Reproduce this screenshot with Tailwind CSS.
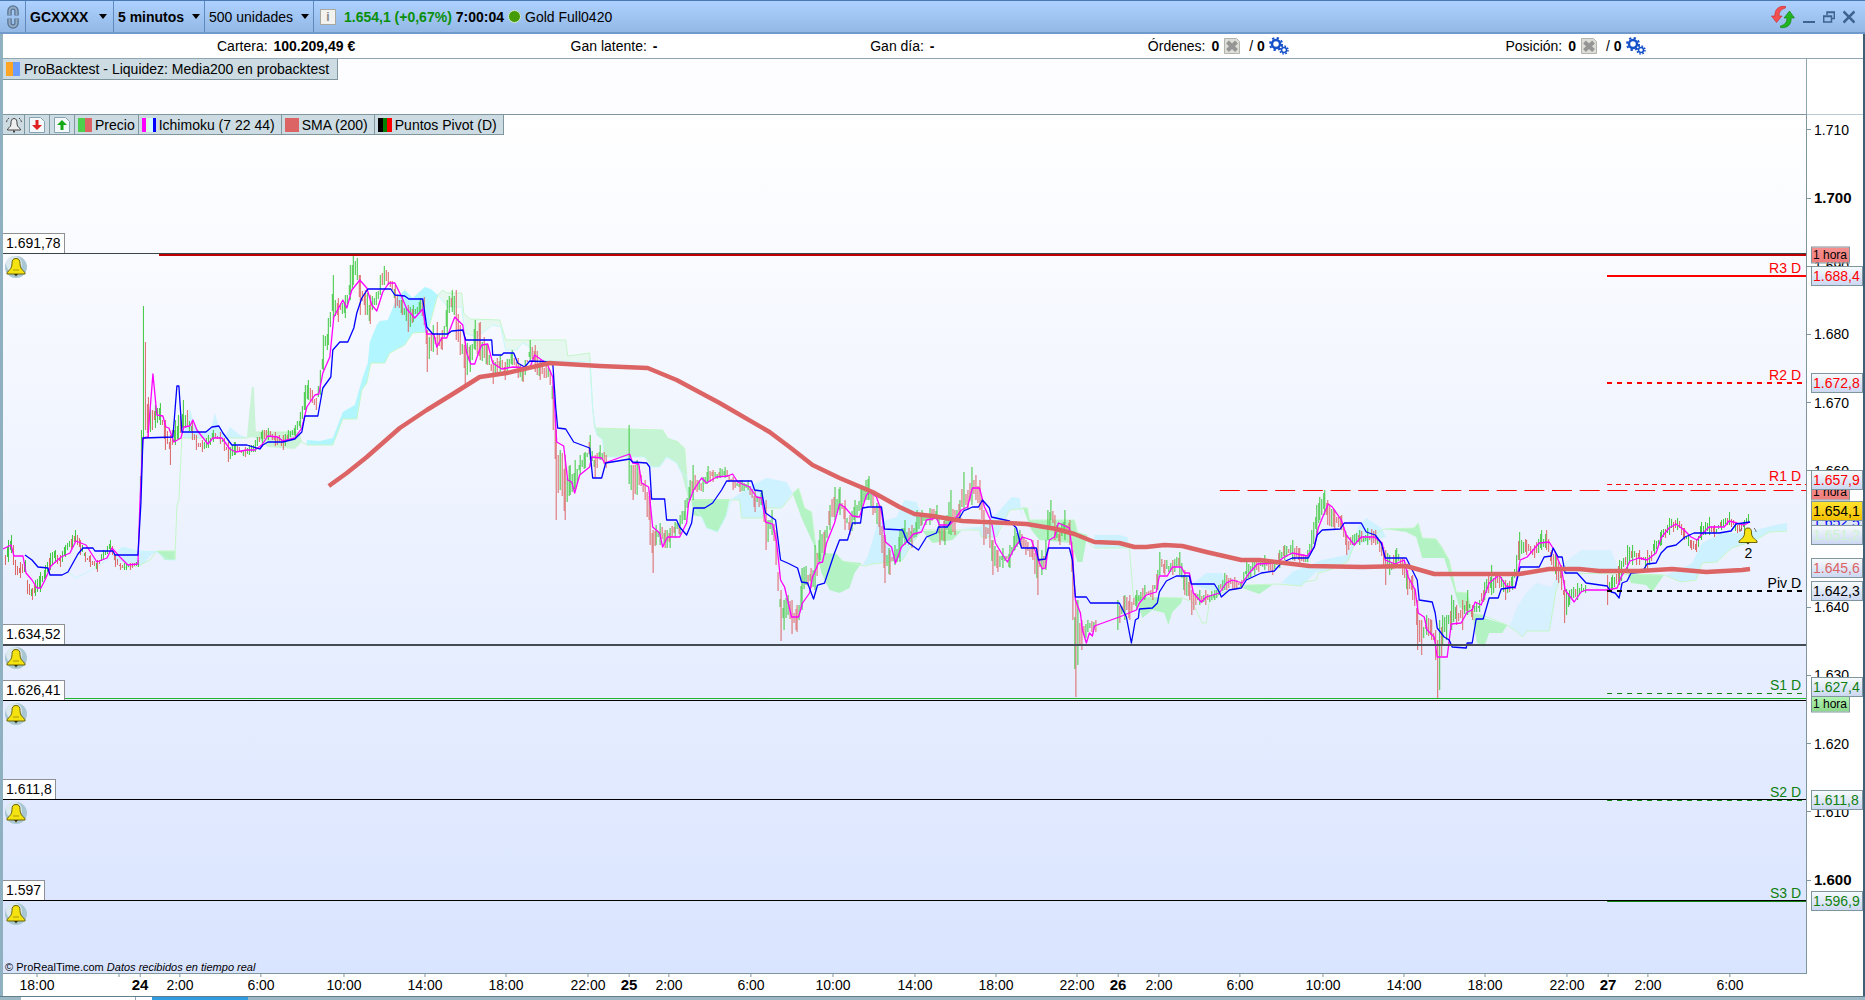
<!DOCTYPE html>
<html lang="es">
<head>
  <meta charset="UTF-8">
  <title>GCXXXX - 5 minutos</title>
  <script src="https://cdn.jsdelivr.net/npm/@tailwindcss/browser@4"></script>
</head>
<body class="h-screen overflow-hidden flex flex-col bg-white text-black text-sm leading-4 font-['Liberation_Sans',Arial,sans-serif]">

  <!-- shared icons -->
  <svg class="hidden">
    <symbol id="bell" viewBox="0 0 24 24">
      <circle cx="12" cy="12" r="11" fill="#a9c6d3"/>
      <circle cx="10" cy="9" r="8" fill="#dbe9ef"/>
      <path d="M12 3.500c-3.300 0-4 2-4 5 0 4-1.500 6-5 9v1.500h18v-1.500c-3.500-3-5-5-5-9 0-3-.7-5-4-5z" fill="#f5e211" stroke="#6b6208" stroke-width="1"/>
      <path d="M9 15h6" stroke="#a89c06"/>
      <path d="M10 19h4l-2 2.500z" fill="#3a3605"/>
    </symbol>
    <symbol id="cancel" viewBox="0 0 16 16">
      <path d="M.5.500h12l3 3v12H.5z" fill="#deded8" stroke="#b4b4ae"/>
      <path d="M3.500 4l9 8.500M12.500 4l-9 8.500" stroke="#959595" stroke-width="4"/>
    </symbol>
    <symbol id="gears" viewBox="0 0 20 18">
      <circle cx="7" cy="7" r="4" fill="none" stroke="#1550c8" stroke-width="2.500"/>
      <circle cx="7" cy="7" r="6" fill="none" stroke="#1550c8" stroke-width="2" stroke-dasharray="2.300 2.410"/>
      <circle cx="15" cy="13" r="2.500" fill="none" stroke="#1550c8" stroke-width="1.500"/>
      <circle cx="15" cy="13" r="4" fill="none" stroke="#1550c8" stroke-width="1.500" stroke-dasharray="1.600 1.540"/>
    </symbol>
    <symbol id="caret" viewBox="0 0 8 5"><path d="M0 0h8l-4 5z"/></symbol>
  </svg>

  <!-- title bar -->
  <header class="h-[34px] shrink-0 flex items-stretch border-t border-b-2 border-t-[#4a78b0] border-b-[#6f9acb] bg-linear-to-b from-[#aed2ff] to-[#93b8e6]">
    <div class="w-[26px] flex items-center justify-center border-r border-[#5f89bd]">
      <svg class="w-3 h-6" viewBox="0 0 12 24" fill="none">
        <path d="M2.500 10.500V6a3.500 3.500 0 0 1 7 0v4.500M2.500 13.500V18a3.500 3.500 0 0 0 7 0v-4.500" stroke="#56728f" stroke-width="4.500"/>
        <path d="M2.500 10V6a3.500 3.500 0 0 1 7 0v4M2.500 14v4a3.500 3.500 0 0 0 7 0v-4" stroke="#93aac4" stroke-width="2"/>
      </svg>
    </div>
    <label class="relative flex items-center w-[88px] border-r border-[#5f89bd]">
      <select aria-label="Valor" class="appearance-none w-full pl-1 font-bold"><option>GCXXXX</option></select>
      <svg class="absolute right-1.5 w-2 h-[5px] pointer-events-none"><use href="#caret"/></svg>
    </label>
    <label class="relative flex items-center w-[91px] border-r border-[#5f89bd]">
      <select aria-label="Intervalo" class="appearance-none w-full pl-1 font-bold"><option>5 minutos</option></select>
      <svg class="absolute right-1 w-2 h-[5px] pointer-events-none"><use href="#caret"/></svg>
    </label>
    <label class="relative flex items-center w-[109px] border-r border-[#5f89bd]">
      <select aria-label="Unidades" class="appearance-none w-full pl-1"><option>500 unidades</option></select>
      <svg class="absolute right-1 w-2 h-[5px] pointer-events-none"><use href="#caret"/></svg>
    </label>
    <div class="flex-1 flex items-center pl-[6px]">
      <button aria-label="Información" class="w-4 h-4 flex items-center justify-center bg-[#f2f2ee] border border-[#a8a8a0] font-bold text-xs text-[#888]">i</button>
      <span class="ml-2 font-bold text-[#0a8f0a]">1.654,1 (+0,67%)</span>
      <span class="ml-1 font-bold">7:00:04</span>
      <span class="ml-1 w-[13px] h-[13px] rounded-full bg-[#459c07] border border-[#d5e8d0]"></span>
      <span class="ml-1">Gold Full0420</span>
    </div>
    <div class="flex items-center gap-2 pr-2.5">
      <button aria-label="Actualizar">
        <svg class="w-6 h-6" viewBox="0 0 24 24">
          <path d="M14.500 1.500C8 .5 3.500 4 3.800 11H.5l5 6.500L11 11H8.200c-.4-4 2-7 6.300-8z" fill="#f25050" stroke="#c22" stroke-width=".6"/>
          <path d="M9.500 22.500c6.500 1 11-2.500 10.700-9.500h3.300l-5-7L13 13h2.800c.4 4-2 7-6.300 8z" fill="#21b521" stroke="#0a7d0a" stroke-width=".6"/>
        </svg>
      </button>
      <button aria-label="Minimizar"><svg class="w-3 h-4" viewBox="0 0 12 16"><path d="M0 13h12" stroke="#3d6391" stroke-width="2"/></svg></button>
      <button aria-label="Restaurar"><svg class="w-3 h-4" viewBox="0 0 12 16" fill="none" stroke="#3d6391"><path d="M4 6V3h7.300v6.500H9M4 3.500h8" stroke-width="1.500"/><path d="M.7 7h7.800v6H.7zM0 7.500h9" stroke-width="1.500"/></svg></button>
      <button aria-label="Cerrar"><svg class="w-3 h-4" viewBox="0 0 12 16"><path d="M.5 2.500l11 11M11.500 2.500l-11 11" stroke="#3d6391" stroke-width="2.500"/></svg></button>
    </div>
  </header>

  <div class="flex-1 min-h-0 flex flex-col border-l-[3px] border-l-[#8fb0c0] border-r-2 border-r-[#3f5f75]">

    <!-- account line -->
    <div class="h-[24px] shrink-0 grid grid-cols-[354fr_300fr_278fr_358fr_358fr] items-center pl-[214px]">
      <div>Cartera: <b class="ml-0.5">100.209,49 €</b></div>
      <div>Gan latente: <b class="ml-0.5">-</b></div>
      <div>Gan día: <b class="ml-0.5">-</b></div>
      <div class="flex items-center gap-1">Órdenes: <b class="ml-0.5">0</b><button aria-label="Cancelar órdenes"><svg class="w-[18px] h-4 block"><use href="#cancel"/></svg></button><span class="ml-1">/ <b>0</b></span><button aria-label="Ajustes de órdenes"><svg class="w-5 h-[18px] block"><use href="#gears"/></svg></button></div>
      <div class="flex items-center gap-1">Posición: <b class="ml-0.5">0</b><button aria-label="Cerrar posición"><svg class="w-[18px] h-4 block"><use href="#cancel"/></svg></button><span class="ml-1">/ <b>0</b></span><button aria-label="Ajustes de posición"><svg class="w-5 h-[18px] block"><use href="#gears"/></svg></button></div>
    </div>

    <!-- backtest panel -->
    <div class="h-[56px] shrink-0 flex border-t border-[#8fa6b2]">
      <div class="flex-1 bg-[#fdfdff] border-r border-[#8fa6b2]">
        <button class="h-[21px] flex items-center gap-1 pl-[3px] pr-2 bg-[#cddce3] border-r border-b border-[#7f969f]">
          <span class="w-[14px] h-[14px] bg-linear-to-r from-[#ffa526] from-50% to-[#6b9dff] to-50%"></span>ProBacktest - Liquidez: Media200 en probacktest
        </button>
      </div>
      <div class="w-[56px]"></div>
    </div>

    <!-- price panel -->
    <div class="flex-1 min-h-0 flex">
      <div id="plot" class="relative flex-1 border-t border-r border-[#7f969f] bg-linear-to-b from-white to-[#d9e4ff]">
        <svg class="absolute inset-0 w-full h-full" viewBox="3 115 1804 858" preserveAspectRatio="none" fill="none" stroke-linejoin="round">
          <!-- Ichimoku cloud -->
          <g fill="#a6f6ff">
            <path d="M307 440L320 441 333 438 343 412 355 405 363 377 368 363 370 342 377 325 380 321 388 320 397 298 405 290 413 298 425 287 431 289 438 295 433 312 428 332 413 333 405 345 390 353 385 363 371 363 367 383 362 390 357 419 343 419 333 445 307 445z" fill-opacity=".85"/>
          </g>
          <g fill="#c6f1ff" fill-opacity=".8">
            <path d="M183 438L190 408 193 420 200 433 211 430 215 413 219 427 226 436 230 427 240 435 248 438z"/>
            <path d="M113 560L122 547 138 551 151 551 157 551 150 556 145 563 139 566z"/>
            <path d="M732 499L753 485 767 478 787 482 793 493 782 508 765 508 763 518 742 518 740 500z"/>
            <path d="M863 565L868 557 878 523 897 517 905 500 917 502 923 517 923 530 913 543 903 560 873 564z"/>
            <path d="M963 528L980 527 998 513 1012 497 1020 498 1023 517 1020 508 1010 510 1002 523 997 537 982 537 980 530z"/>
            <path d="M1095 535L1120 535 1128 537 1130 548 1095 548z"/>
            <path d="M1192 585L1207 573 1223 573 1227 583 1222 593z"/>
            <path d="M1282 583L1293 572 1323 560 1347 555 1353 543 1360 525 1367 518 1382 528 1387 537 1355 545 1350 560 1330 570 1317 572 1302 586z"/>
            <path d="M1510 627L1518 607 1527 593 1537 583 1552 587 1557 578 1565 563 1582 550 1612 550 1617 563 1622 572 1565 572 1557 590 1552 627 1550 631 1528 631 1523 637 1518 632z" fill-opacity=".5"/>
            <path d="M1667 575L1680 570 1693 563 1703 543 1723 533 1740 533 1757 530 1776 525 1788 523 1788 531 1770 532 1757 540 1733 548 1727 553 1718 562 1703 563 1697 580 1682 582z"/>
          </g>
          <path d="M438 295L443 290 447 293 462 293 464 313 470 319 500 320 506 340 566 340 568 356 590 353 591 362 533 360 530 347 523 343 517 350 506 350 501 327 493 325 477 337 465 333 462 307 448 307z" fill="#dff6ea" fill-opacity=".7"/>
          <path d="M256 432L298 432 302 442 295 449 268 447 258 438 247 437 252 387 254 387z" fill="#cbf3d8"/>
          <g fill="#adf3bd" fill-opacity=".9">
            <path d="M157 551H175V560H165z"/>
            <path d="M595 428L663 430 668 438 678 441 685 448 689 500 682 473 677 463 667 457 660 467 652 467 645 457 604 457 603 440 597 435z" fill-opacity=".65"/>
            <path d="M692 499H730L726 517 718 532 707 528 702 517 693 515z"/>
            <path d="M793 493L799 488 805 508 812 512 817 553 837 554 843 561 862 563 855 573 850 588 840 593 830 590 822 573 817 553 813 542 802 518z"/>
            <path d="M923 531H962L953 540 933 543z"/>
            <path d="M1023 507L1028 508 1030 520 1075 520 1078 532 1088 535 1083 562 1078 562 1072 543 1040 540 1032 530z"/>
            <path d="M1135 597L1183 598 1182 603 1173 612 1169 625 1165 613 1153 610 1143 618 1138 603z"/>
            <path d="M1247 585H1273L1260 594 1243 588z"/>
            <path d="M1385 529L1415 528 1419 523 1423 538 1437 539 1443 547 1450 560 1457 592 1468 593 1473 613 1483 615 1485 618 1508 625 1503 633 1490 633 1485 647 1478 643 1473 615 1460 607 1453 583 1445 558 1423 558 1417 537 1407 532z"/>
            <path d="M1628 573L1665 575 1653 592 1647 585 1632 583z"/>
          </g>
          <polyline stroke="#c4f7c8" points="120,568 138,566 150,560 157,551 175,551 175,560 177,506 179,500 182,438 248,438 256,432 298,432 302,442 307,445 333,445 343,419 357,419 362,390 367,383 371,363 385,363 390,353 405,345 413,333 428,332 438,295 443,290 447,293 462,293 464,313 470,319 500,320 506,340 566,340 568,356 590,353 593,407 595,428 663,430 668,438 685,448 689,500 740,500 742,518 763,518 765,508 782,508 799,488 805,508 812,512 817,553 837,554 843,561 865,566 873,564 903,560 913,543 923,530 980,530 982,537 997,537 1010,510 1028,508 1030,520 1075,520 1078,532 1095,548 1130,548 1134,597 1183,598 1193,602 1203,623 1207,623 1210,602 1222,593 1247,585 1280,584 1302,586 1305,582 1317,580 1319,573 1330,570 1348,562 1355,545 1385,529 1415,528 1419,523 1423,538 1437,539 1450,560 1457,592 1468,593 1473,613 1483,615 1508,625 1518,632 1523,637 1528,631 1550,631 1557,590 1563,573 1665,575 1682,582 1697,580 1703,563 1718,562 1727,553 1733,548 1757,540 1770,532 1788,531"/>
          <polyline stroke="#c8f6fa" points="65,570 76,578 95,568 113,556 122,547 138,551 157,552 168,560 175,560"/>
          <polyline stroke="#c8f6fa" points="438,295 448,307 462,307 465,333 477,337 493,325 501,327 506,350 517,350 523,343 530,347 533,360 590,362 593,410 597,435 603,440 604,457 645,457 652,467 660,467 667,457 677,463 682,473 687,476 690,503 702,517 707,528 718,532 726,517 732,499"/>

          <g id="candles" stroke-width="1" shape-rendering="crispEdges"></g>

          <!-- Tenkan / Kijun -->
          <polyline stroke="#ff00ff" stroke-width="1.300" points="3,549 11,545 14,556 23,556 26,573 32,580 37,588 41,588 45,580 51,566 61,557 70,553 76,541 86,545 97,562 107,558 112,548 120,557 128,565 138,564 140,503 143,438 148,437 153,374 157,415 163,416 166,427 169,428 174,442 181,438 184,427 190,426 193,420 197,430 208,444 213,438 222,438 230,449 236,452 247,450 255,450 262,445 268,436 278,437 283,441 295,438 302,428 307,407 315,395 319,394 323,373 330,357 334,317 343,300 347,308 352,290 360,280 367,288 372,305 377,311 383,292 389,283 395,283 402,297 407,309 415,318 423,309 427,334 434,334 437,347 442,338 447,338 455,317 463,325 467,353 471,364 475,364 479,352 482,345 488,344 493,363 502,369 513,367 530,368 535,355 542,360 547,363 553,377 555,407 557,442 564,446 568,480 572,482 575,493 580,475 590,467 592,457 602,458 605,463 630,454 633,463 639,464 642,483 649,487 653,527 660,533 663,547 668,537 680,537 687,523 689,503 694,490 702,478 707,483 717,477 728,476 733,474 738,482 750,487 757,497 762,498 766,522 773,524 777,542 781,580 785,587 792,617 799,617 803,603 810,593 813,577 819,563 823,562 827,543 835,523 840,504 845,507 853,516 860,517 867,495 870,492 877,497 882,512 886,542 892,547 896,563 902,547 907,542 914,534 922,532 927,520 937,518 940,525 950,525 957,517 962,510 968,507 973,488 980,488 985,507 992,522 996,543 1002,553 1008,562 1015,548 1023,537 1032,540 1040,563 1043,569 1046,568 1050,540 1055,537 1059,523 1070,528 1073,553 1076,600 1081,613 1083,630 1087,643 1090,633 1093,636 1095,626 1120,617 1137,610 1140,603 1147,595 1157,592 1160,576 1168,576 1173,567 1182,567 1185,573 1190,573 1194,593 1202,602 1207,597 1220,593 1227,583 1233,580 1243,583 1250,573 1258,564 1277,563 1285,557 1293,553 1308,556 1315,547 1319,528 1323,518 1329,504 1333,507 1342,520 1347,535 1355,545 1362,537 1375,537 1383,543 1386,560 1396,564 1405,560 1409,577 1416,590 1419,613 1425,617 1428,630 1435,637 1438,657 1448,657 1452,624 1462,623 1468,612 1473,610 1476,602 1482,605 1490,583 1500,575 1507,586 1516,588 1521,560 1528,557 1540,543 1550,542 1555,550 1562,567 1566,590 1575,602 1582,592 1587,590 1608,590 1618,588 1622,577 1628,567 1631,561 1640,558 1648,560 1657,553 1662,538 1670,528 1677,524 1685,530 1692,537 1698,540 1702,535 1710,527 1725,527 1730,521 1738,523 1745,525 1751,522"/>
          <polyline stroke="#0000ff" stroke-width="1.300" points="25,555 32,560 38,567 48,568 50,575 62,575 68,572 78,554 83,548 93,548 95,551 113,551 115,555 138,555 141,503 143,438 173,437 177,386 179,386 182,432 206,432 212,427 219,426 223,433 232,445 247,445 260,449 263,445 268,442 283,442 295,439 302,432 305,416 318,416 323,388 331,377 333,350 340,342 348,342 354,328 357,313 362,298 368,289 391,289 395,295 405,296 409,299 423,299 427,327 433,334 448,334 452,331 463,330 466,340 492,340 493,355 502,355 504,353 514,353 518,363 525,367 530,361 553,362 556,407 558,428 566,429 574,442 590,448 593,478 602,478 606,463 630,459 633,462 647,463 650,467 652,499 665,499 667,520 677,520 680,527 687,535 692,523 694,508 705,508 713,503 722,490 727,481 752,481 755,490 762,491 766,513 776,520 781,560 788,563 798,568 802,582 808,583 814,599 818,585 825,583 835,553 840,540 848,540 853,523 861,523 863,508 869,507 882,507 885,529 903,530 908,542 919,550 927,537 937,533 939,527 948,527 952,520 960,518 964,511 973,507 979,507 983,500 990,508 992,517 1010,521 1017,528 1022,548 1037,548 1039,560 1046,559 1049,548 1070,548 1073,560 1076,597 1087,597 1091,603 1120,603 1127,617 1132,643 1136,620 1139,618 1140,609 1153,608 1158,603 1160,592 1167,581 1177,576 1190,576 1192,584 1215,584 1220,592 1222,597 1230,590 1242,588 1247,580 1262,573 1275,571 1282,563 1293,558 1309,558 1315,547 1318,535 1323,530 1341,529 1345,523 1362,523 1367,532 1376,535 1382,543 1386,558 1407,558 1413,570 1418,580 1420,600 1433,602 1436,613 1438,628 1445,637 1450,640 1453,647 1467,648 1468,643 1473,643 1477,619 1484,619 1490,598 1499,598 1502,589 1516,587 1521,567 1540,567 1545,557 1552,556 1554,548 1559,557 1563,557 1566,573 1578,573 1587,583 1608,586 1612,592 1616,593 1620,598 1623,583 1628,581 1632,573 1643,572 1648,564 1657,563 1662,553 1668,547 1677,545 1686,537 1695,533 1720,533 1732,531 1737,524 1751,522"/>

          <!-- SMA (200) -->
          <polyline stroke="#dc6464" stroke-width="4.500" points="329,486 347,473 367,457 400,428 427,410 453,394 480,377 507,373 550,363 600,366 648,368 677,380 720,403 770,432 790,447 813,465 840,478 873,492 900,507 915,514 933,516 963,521 1027,524 1057,529 1075,534 1095,542 1120,543 1135,547 1147,547 1165,545 1183,546 1207,552 1242,560 1260,560 1310,566 1363,567 1407,566 1435,574 1520,574 1550,569 1580,569 1600,571 1640,571 1673,569 1707,572 1743,570 1751,569"/>

          <!-- alarm levels -->
          <g shape-rendering="crispEdges">
            <path d="M159 255H1807" stroke="#c00000" stroke-width="2"/>
            <path d="M3 253.500H1807" stroke="#3a4548"/>
            <path d="M3 645H1807" stroke="#454b52" stroke-width="2"/>
            <path d="M3 698.500H1807" stroke="#1fb52a"/>
            <path d="M3 700.500H1807M3 799.500H1807M3 900.500H1807" stroke="#000"/>
            <!-- daily pivots -->
            <path d="M1608 276H1807" stroke="#ff0000" stroke-width="2"/>
            <path d="M1608 383H1807" stroke="#ff0000" stroke-width="2" stroke-dasharray="5 5"/>
            <path d="M1608 484.500H1807" stroke="#ff0000" stroke-dasharray="5 4"/>
            <path d="M1220.500 490.500H1807" stroke="#ff0000" stroke-dasharray="20 7.700"/>
            <path d="M1608 591H1807" stroke="#000" stroke-width="2" stroke-dasharray="5 5"/>
            <path d="M1608 693.500H1807" stroke="#108010" stroke-dasharray="5 5"/>
            <path d="M1608 800.500H1807" stroke="#108010" stroke-dasharray="5 5"/>
            <path d="M1608 901.500H1807" stroke="#108010"/>
          </g>
        </svg>

        <div class="relative flex h-[20px] w-max bg-[#cddce3] border-b border-[#7f969f]">
          <button aria-label="Alarmas" class="w-[22px] flex items-center justify-center border-r border-[#7f969f]">
            <svg class="w-[18px] h-[18px]" viewBox="0 0 18 18" fill="none" stroke="#444">
              <path d="M9 2.500C6.500 2.500 6 5 6 7c0 3-1 4-3.500 6v1h13v-1c-2.500-2-3.500-3-3.500-6 0-2-.5-4.500-3-4.500z" fill="#eee"/><path d="M8 15.500h2" stroke-width="2"/><path d="M4 2C2.500 3 1.500 4.500 1.500 7M14 2c1.500 1 2.500 2.500 2.500 5" stroke-dasharray="2 1"/>
            </svg>
          </button>
          <button aria-label="Vender" class="w-[25px] flex items-center justify-center border-r border-[#7f969f]">
            <svg class="w-[18px] h-4" viewBox="0 0 16 16"><path d="M.5.500h11l4 4v11H.5z" fill="#f4f8fa" stroke="#86a3b4"/><path d="M6.500 3h3v5H13l-5 5-5-5h3.500z" fill="#e02020"/></svg>
          </button>
          <button aria-label="Comprar" class="w-[25px] flex items-center justify-center border-r border-[#7f969f]">
            <svg class="w-[18px] h-4" viewBox="0 0 16 16"><path d="M.5.500h11l4 4v11H.5z" fill="#f4f8fa" stroke="#86a3b4"/><path d="M6.500 13h3V8H13L8 3 3 8h3.500z" fill="#14a814"/></svg>
          </button>
          <button class="flex items-center gap-[3px] px-[3px] border-r border-[#7f969f]"><span class="w-[14px] h-[14px] bg-linear-to-r from-[#4cd04c] from-50% to-[#dc6464] to-50%"></span>Precio</button>
          <button class="flex items-center gap-[3px] pl-[3px] pr-1.5 border-r border-[#7f969f]"><span class="w-[14px] h-[14px] flex"><i class="w-1 bg-[#ff00ff]"></i><i class="w-[3px] bg-[#d8fbe0]"></i><i class="w-[4px] bg-[#d4fbff]"></i><i class="w-[3px] bg-[#0000ff]"></i></span>Ichimoku (7 22 44)</button>
          <button class="flex items-center gap-[3px] pl-[3px] pr-1.5 border-r border-[#7f969f]"><span class="w-[14px] h-[14px] bg-[#dc6464]"></span>SMA (200)</button>
          <button class="flex items-center gap-[3px] pl-[3px] pr-1.5 border-r border-[#7f969f]"><span class="w-[14px] h-[14px] flex"><i class="w-[5px] bg-black"></i><i class="w-1 bg-[#008000]"></i><i class="w-[5px] bg-[#ff0000]"></i></span>Puntos Pivot (D)</button>
        </div>

        <!-- alarm mark on the last bars -->
        <div class="absolute left-[96.800%] top-[48%] w-6 -translate-x-1/2 flex flex-col items-center text-sm leading-3">
          <svg class="w-5 h-[18px]" viewBox="0 0 20 18"><path d="M10 1C7 1 6.500 3 6.500 6c0 3-1.500 5-5.500 8v1.500h18V14c-4-3-5.500-5-5.500-8 0-3-.5-5-3.500-5z" fill="#f5e211" stroke="#6b6208"/><path d="M8 15.500h4l-2 2z" fill="#3a3605"/><path d="M4 1C2.500 2.500 2 4 2 5M16 1c1.500 1.500 2 3 2 4" stroke="#666" fill="none"/></svg>
          <span class="mt-0.5">2</span>
        </div>

        <p class="absolute left-0.5 bottom-0 text-[11px] leading-3">© ProRealTime.com <i>Datos recibidos en tiempo real</i></p>
      </div>
      <div id="prices" class="relative w-[56px] border-t border-[#b9cad2]"></div>
    </div>

    <!-- time axis -->
    <div class="h-[23px] shrink-0 flex">
      <div id="times" class="relative flex-1 border-t border-[#7f969f]"></div>
      <div class="w-[56px]"></div>
    </div>
  </div>

  <!-- scroll bar -->
  <div class="h-[4px] shrink-0 flex border-t border-[#5f7f8f] bg-[#9cb8c5]">
    <div class="ml-[21px] w-[115px] bg-white border-r border-[#8fa6b2]"></div>
    <div class="w-[16px] bg-white"></div>
    <div class="w-[96px] bg-[#2f9be0]"></div>
  </div>

  <script>
    const TOP = 115, HEIGHT = 858, LEFT = 3, WIDTH = 1804;
    const priceY = p => 880 - (p - 1600) * 6.82;
    const pctY = y => (y - TOP) / HEIGHT * 100 + '%';
    const pctX = x => (x - LEFT) / WIDTH * 100 + '%';

    // bar envelopes: x, high, low (0 = market closed)
    const bars = [5,555,565, 8,540,562, 11,535,553, 13,545,565, 15,560,575, 20,562,578, 25,560,572, 27,580,594, 32,588,600, 35,580,596, 40,572,592, 45,565,580, 50,553,570, 55,550,563, 60,555,567, 65,545,557, 72,535,548, 75,530,541, 80,540,555, 85,552,562, 90,555,567, 97,560,572, 103,550,560, 110,540,550, 115,555,567, 120,563,570, 130,563,570, 138,560,567, 141,430,490, 143,306,440, 145,342,430, 148,397,437, 152,410,430, 155,405,428, 160,403,425, 165,420,450, 170,435,465, 175,420,445, 178,415,440, 183,400,430, 187,410,427, 192,420,440, 196,435,450, 202,440,452, 208,435,448, 213,430,442, 220,432,444, 228,442,462, 235,442,455, 245,447,457, 255,440,452, 262,430,445, 268,428,440, 275,432,446, 283,435,450, 288,430,440, 295,425,438, 300,412,428, 305,385,410, 308,380,400, 312,390,403, 316,398,410, 320,370,395, 323,335,370, 328,318,345, 333,275,320, 338,298,322, 345,295,318, 350,265,300, 353,256,285, 357,258,280, 360,275,315, 365,290,315, 370,295,324, 376,292,305, 380,275,295, 384,266,285, 388,272,285, 395,285,308, 402,295,315, 408,305,332, 413,305,322, 420,298,312, 424,297,325, 427,330,372, 433,325,352, 437,322,355, 442,330,350, 447,300,335, 452,290,312, 456,290,340, 460,325,355, 465,340,385, 470,345,372, 475,320,350, 480,322,360, 487,345,365, 493,360,384, 500,355,372, 505,362,380, 512,350,365, 518,358,378, 523,368,382, 530,340,360, 535,345,372, 540,360,380, 546,363,378, 550,370,385, 553,380,430, 556,430,520, 560,450,490, 565,455,520, 570,465,495, 575,460,490, 580,455,475, 585,452,468, 590,435,460, 595,455,478, 600,445,460, 606,455,468, 607,0,0, 628,0,0, 629,425,484, 633,465,500, 637,460,495, 645,480,500, 650,490,545, 653,530,573, 656,525,545, 660,523,545, 665,530,548, 670,528,548, 675,522,538, 680,515,535, 685,500,520, 690,480,500, 693,465,500, 697,480,492, 703,477,492, 708,466,482, 713,470,482, 720,468,478, 725,467,478, 733,477,490, 740,480,492, 748,480,490, 755,490,512, 762,490,505, 766,500,550, 772,510,535, 776,530,565, 781,590,641, 784,600,630, 788,595,615, 792,600,634, 797,605,632, 802,568,610, 806,566,585, 811,568,588, 815,545,590, 820,530,560, 825,530,555, 830,505,530, 835,487,520, 840,487,515, 845,500,530, 850,515,535, 855,500,525, 862,485,510, 866,480,500, 869,476,500, 873,495,515, 880,505,535, 885,535,583, 890,550,575, 895,545,565, 900,530,562, 905,520,545, 912,525,548, 917,510,535, 922,510,525, 930,508,525, 937,505,520, 940,525,545, 945,520,545, 951,490,535, 955,510,535, 960,500,520, 964,472,510, 968,490,510, 972,467,505, 976,475,500, 980,480,510, 984,510,545, 990,520,548, 993,540,575, 998,550,572, 1003,548,568, 1010,545,568, 1015,528,550, 1020,530,545, 1026,540,555, 1033,540,560, 1038,540,595, 1042,550,575, 1046,540,570, 1048,510,540, 1051,500,520, 1055,515,540, 1060,530,545, 1065,510,540, 1070,520,545, 1073,550,620, 1076,600,697, 1078,600,665, 1082,620,650, 1088,620,632, 1096,620,632, 1097,0,0, 1117,0,0, 1118,600,630, 1125,595,620, 1130,595,620, 1137,590,610, 1145,585,600, 1153,585,600, 1158,570,590, 1160,552,575, 1165,560,575, 1173,560,575, 1180,552,575, 1185,570,595, 1190,575,600, 1192,590,615, 1200,590,605, 1206,590,605, 1215,590,600, 1225,573,590, 1235,577,590, 1242,580,588, 1247,560,580, 1255,558,575, 1265,555,570, 1273,562,575, 1280,550,568, 1285,545,560, 1293,540,560, 1300,548,565, 1308,550,562, 1312,530,550, 1317,505,535, 1320,497,520, 1325,490,515, 1328,500,525, 1335,510,530, 1342,515,530, 1347,535,555, 1353,535,545, 1360,530,545, 1368,528,545, 1376,530,545, 1380,540,552, 1386,550,585, 1390,555,575, 1397,548,565, 1403,558,575, 1408,570,595, 1413,575,600, 1418,600,650, 1422,620,655, 1427,615,635, 1432,620,640, 1436,630,660, 1438,640,698, 1440,620,690, 1443,615,645, 1447,615,640, 1452,595,630, 1457,605,625, 1463,600,630, 1468,590,615, 1473,605,620, 1480,600,612, 1485,582,600, 1492,565,595, 1500,573,588, 1506,580,600, 1513,575,590, 1517,555,575, 1520,532,560, 1527,540,555, 1535,545,558, 1542,530,550, 1547,530,550, 1552,550,565, 1557,555,580, 1562,565,590, 1565,580,623, 1570,590,605, 1578,583,600, 1586,585,593, 1587,0,0, 1607,0,0, 1608,575,605, 1613,575,590, 1620,560,585, 1628,545,570, 1633,545,565, 1640,550,565, 1648,550,570, 1655,540,555, 1662,530,545, 1670,518,535, 1678,518,530, 1685,528,540, 1692,540,550, 1697,540,552, 1702,522,540, 1710,517,535, 1715,525,537, 1722,520,530, 1730,512,525, 1738,525,533, 1745,520,530, 1751,510,520];

    let seed = 7;
    const rnd = () => (seed = (seed * 16807) % 2147483647) / 2147483647;
    let up = '', down = '', prev = 1120;
    for (let i = 0; i + 5 < bars.length; i += 3) {
      const [x0, h0, l0, x1, h1, l1] = bars.slice(i, i + 6);
      if (!h0) continue;
      const rose = h0 + l0 < prev;
      prev = h0 + l0;
      for (let x = x0; x < x1; x += 2) {
        const first = x === x0;
        const t = h1 ? (x - x0) / (x1 - x0) : 0;
        const high = h0 + (h1 - h0) * t, low = l0 + (l1 - l0) * t;
        const cut = first ? 0 : (low - high) * 0.45;
        const seg = `M${x + 0.5} ${Math.round(high + rnd() * cut)}V${Math.round(low - rnd() * cut)}`;
        const chance = rnd();
        const rising = first ? rose : chance < (h1 && h1 + l1 < h0 + l0 ? 0.75 : 0.25);
        if (rising) up += seg; else down += seg;
      }
    }
    document.getElementById('candles').innerHTML =
      `<path d="${up}" stroke="#3cc83c"/><path d="${down}" stroke="#dc6464"/>`;

    const plot = document.getElementById('plot');
    const prices = document.getElementById('prices');
    const times = document.getElementById('times');
    const add = (parent, html) => parent.insertAdjacentHTML('beforeend', html);

    // price scale
    for (let p = 1710; p >= 1600; p -= 10) {
      if (p === 1650) continue;
      const bold = p % 100 === 0 ? 'font-bold text-[15px]' : '';
      add(prices, `<div class="absolute left-0 flex items-center -translate-y-1/2 ${bold}" style="top:${pctY(priceY(p))}"><i class="w-1 h-px mr-[3px] bg-[#7f969f]"></i>${(p / 1000).toFixed(3)}</div>`);
    }

    // price tags: y, text, colour
    const tag = 'absolute left-1 h-5 w-[52px] pl-px border border-[#7f969f] leading-[18px] -translate-y-1/2 ';
    const hour = 'absolute left-1 h-[17px] w-[39px] pl-px border border-[#7f969f] text-xs leading-[15px] -translate-y-1/2 ';
    [
      [255, '1 hora', hour + 'bg-linear-to-b from-[#f79090] to-[#f07c7c]'],
      [276, '1.688,4', tag + 'bg-linear-to-b from-[#f6fafc] to-[#ccd8f2] text-[#ff0000]'],
      [383, '1.672,8', tag + 'bg-linear-to-b from-[#f6fafc] to-[#ccd8f2] text-[#ff0000]'],
      [492, '1 hora', hour + 'bg-linear-to-b from-[#f79090] to-[#f07c7c]'],
      [480, '1.657,9', tag + 'bg-linear-to-b from-[#f6fafc] to-[#ccd8f2] text-[#ff0000]'],
      [522, '1.652,5', tag + 'bg-linear-to-b from-[#f6fafc] to-[#ccd8f2] text-[#0000ff]'],
      [535, '1.651,2', tag + 'bg-linear-to-b from-[#f6fafc] to-[#ccd8f2] text-[#ccf3cf]'],
      [511, '1.654,1', tag + 'bg-linear-to-b from-[#ffe22a] to-[#f3c000]'],
      [568, '1.645,6', tag + 'bg-linear-to-b from-[#f6fafc] to-[#ccd8f2] text-[#dc6464]'],
      [591, '1.642,3', tag + 'bg-linear-to-b from-[#f6fafc] to-[#ccd8f2]'],
      [704, '1 hora', hour + 'bg-linear-to-b from-[#b4f5b4] to-[#8cd88c]'],
      [687, '1.627,4', tag + 'bg-linear-to-b from-[#f6fafc] to-[#ccd8f2] text-[#108010]'],
      [800, '1.611,8', tag + 'bg-linear-to-b from-[#f6fafc] to-[#ccd8f2] text-[#108010]'],
      [901, '1.596,9', tag + 'bg-linear-to-b from-[#f6fafc] to-[#ccd8f2] text-[#108010]'],
    ].forEach(([y, text, cls]) => add(prices, `<div class="${cls}" style="top:${pctY(y)}">${text}</div>`));

    // pivot names
    [[276, 'R3 D', 'text-[#ff0000]'], [383, 'R2 D', 'text-[#ff0000]'], [484, 'R1 D', 'text-[#ff0000]'], [591, 'Piv D', 'text-black'],
     [693, 'S1 D', 'text-[#108010]'], [800, 'S2 D', 'text-[#108010]'], [901, 'S3 D', 'text-[#108010]']]
      .forEach(([y, text, cls]) => add(plot, `<div class="absolute right-[5px] -translate-y-full ${cls}" style="top:${pctY(y)}">${text}</div>`));

    // alarms
    [[253, '1.691,78'], [644, '1.634,52'], [700, '1.626,41'], [799, '1.611,8'], [900, '1.597']].forEach(([y, text]) => {
      add(plot, `<div class="absolute left-0 h-[20px] px-[3px] bg-white border-t border-r border-[#8f8f96] leading-[19px] -translate-y-full" style="top:${pctY(y)}">${text}</div>`);
      add(plot, `<svg class="absolute left-px w-6 h-6 mt-0.5" style="top:${pctY(y)}"><use href="#bell"/></svg>`);
    });

    // time scale
    [[37, '18:00'], [119, ''], [140, '24'], [180, '2:00'], [261, '6:00'], [344, '10:00'], [425, '14:00'], [506, '18:00'], [588, '22:00'],
     [629, '25'], [669, '2:00'], [751, '6:00'], [833, '10:00'], [915, '14:00'], [996, '18:00'], [1077, '22:00'],
     [1118, '26'], [1159, '2:00'], [1240, '6:00'], [1323, '10:00'], [1404, '14:00'], [1485, '18:00'], [1567, '22:00'],
     [1608, '27'], [1648, '2:00'], [1730, '6:00']].forEach(([x, text]) => {
      const bold = text.length === 2 ? 'font-bold text-[15px]' : '';
      add(times, `<div class="absolute top-0 flex flex-col items-center -translate-x-1/2 ${bold}" style="left:${pctX(x)}"><i class="w-px h-[3px] bg-[#7f969f]"></i>${text}</div>`);
    });
  </script>
</body>
</html>
